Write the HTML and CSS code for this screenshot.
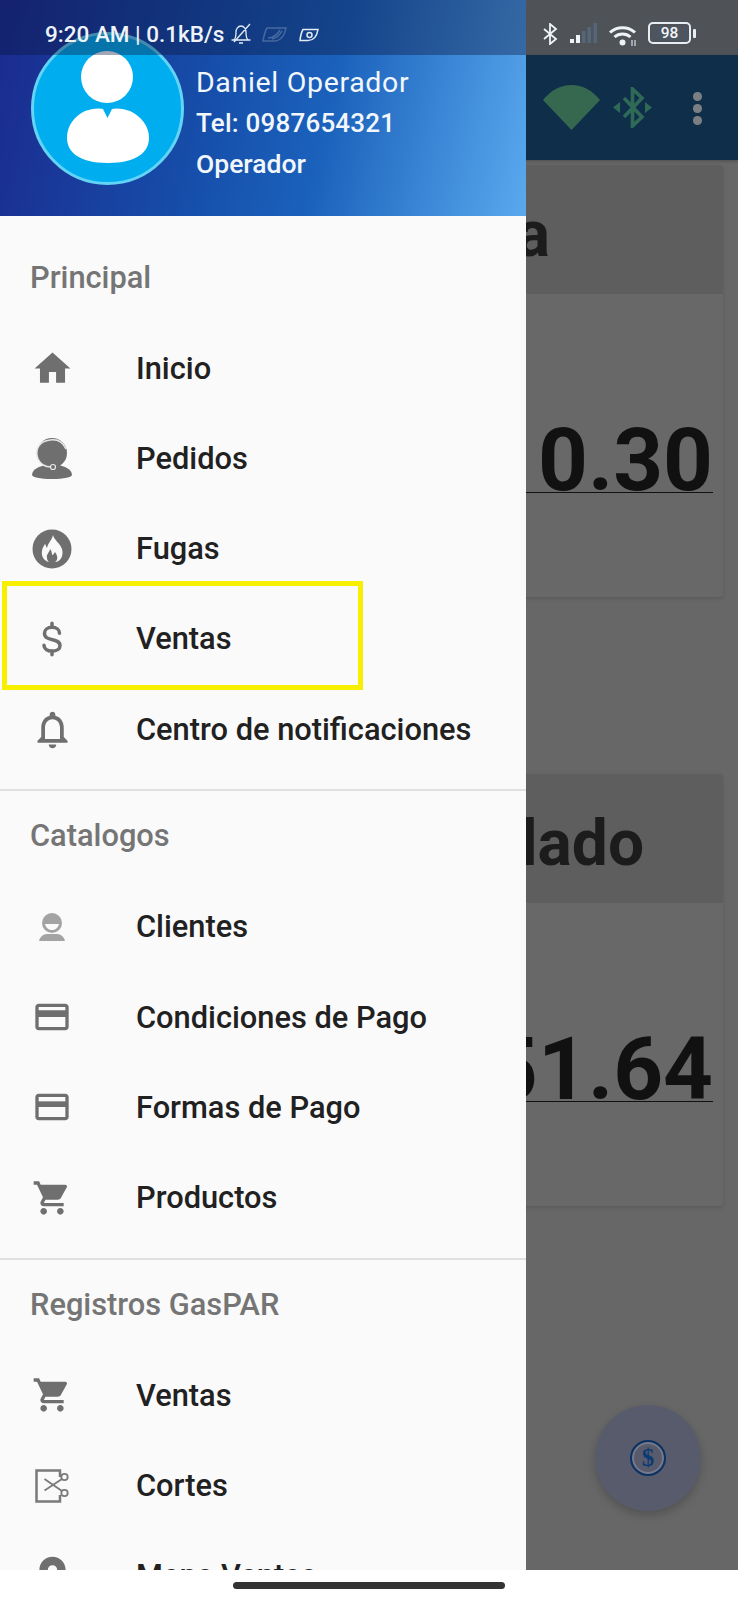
FILE: index.html
```html
<!DOCTYPE html>
<html lang="es">
<head>
<meta charset="utf-8">
<title>GasPAR</title>
<link rel="stylesheet" href="styles.css">
</head>
<body>
<div class="phone">
  <div class="stage">
    <main class="app">
      <div class="appbar">
        <svg class="ab-wifi" viewBox="0 0 57 45"><path d="M0 15C8 5 18 0 28.500 0S49 5 57 15L28.500 45z"/></svg>
        <svg class="ab-bt" viewBox="0 0 39 41"><path class="bt-line" d="M11 11l18 19-9.500 9V2l9.500 9-18 19"/><path class="bt-tri" d="M0 20.500l7-5.500v11zM39 20.500l-7-5.500v11z"/></svg>
        <span class="ab-dots"><i></i><i></i><i></i></span>
      </div>
      <div class="cards">
        <section class="card">
          <h2 class="card-title card-title-one">Venta</h2>
          <div class="card-body"><div class="amount">$ 0.30</div></div>
        </section>
        <section class="card">
          <h2 class="card-title card-title-two">Acumulado</h2>
          <div class="card-body"><div class="amount">$51.64</div></div>
        </section>
      </div>
      <button class="fab"><span class="fab-ring">$</span></button>
    </main>

    <aside class="drawer">
      <header class="drawer-head">
        <svg class="avatar" viewBox="0 0 153 153">
          <circle cx="76.500" cy="76.500" r="75" fill="#00aeef" stroke="#63d3f6" stroke-width="3"/>
          <ellipse cx="76" cy="45" rx="26" ry="26" fill="#fff"/>
          <path d="M54 79c8-3 15-3 18-2l4.500 9 4.500-9c4-1 10-1 18 2 10 5 19 14 19 27 0 14-12 25-41 25s-41-11-41-25c0-13 8-22 18-27z" fill="#fff"/>
        </svg>
        <div class="who">
          <div class="who-name">Daniel Operador</div>
          <div class="who-tel">Tel: 0987654321</div>
          <div class="who-role">Operador</div>
        </div>
      </header>

      <section class="group group-first">
        <h3 class="group-title">Principal</h3>
        <a class="row"><span class="ico"><svg class="s43" viewBox="0 0 24 24"><path d="M10 20v-6h4v6h5v-8h3L12 3 2 12h3v8z"/></svg></span><span class="label">Inicio</span></a>
        <a class="row"><span class="ico"><svg class="s42" viewBox="0 0 42 42"><circle cx="21" cy="16" r="15"/><path d="M1 38c0-6 8-9 14-10h12c6 1 14 4 14 10 0 2-8 4-20 4S1 40 1 38z"/><path class="cut" d="M7 22C3 12 9 4 19 3c7-1 13 2 16 9M7 22c3 6 8 8 13 8"/><circle class="cut-dot" cx="22" cy="30" r="2.500"/></svg></span><span class="label">Pedidos</span></a>
        <a class="row"><span class="ico"><svg class="s40" viewBox="0 0 40 40"><circle cx="20" cy="20" r="19.500"/><path class="flame" d="M21 6c1 5 7 8 9 14 2 7-2 13-7 13 3-2 3-6 0-10-1 2-2 3-3 3 0-3-1-5-2-6 0 3-4 5-3 9 0 2 1 3 2 4-5-1-8-6-7-11 0-3 2-5 3-7 1 1 1 3 2 4 1-5 5-8 6-13z"/></svg></span><span class="label">Fugas</span></a>
        <a class="row row-mark"><span class="ico"><svg class="s40" viewBox="0 0 24 24"><path class="thin" d="M16.500 8.500c0-2-1.800-3.500-4.500-3.500S7.500 6.500 7.500 8.500c0 5.500 9.300 2.500 9.300 7.500 0 2-2 3.300-4.800 3.300s-4.800-1.300-4.800-3.500M12 2.500V5M12 19v2.500"/></svg></span><span class="label">Ventas</span></a>
        <a class="row"><span class="ico"><svg class="s45" viewBox="0 0 24 24"><path d="M12 22c1.100 0 2-.9 2-2h-4c0 1.100.9 2 2 2zm6-6v-5c0-3.070-1.630-5.640-4.500-6.320V4c0-.83-.67-1.500-1.500-1.500s-1.500.67-1.500 1.500v.68C7.640 5.360 6 7.920 6 11v5l-2 2v1h16v-1l-2-2zm-2 1H8v-6c0-2.480 1.510-4.500 4-4.500s4 2.020 4 4.500v6z"/></svg></span><span class="label">Centro de notificaciones</span></a>
      </section>

      <section class="group">
        <h3 class="group-title">Catalogos</h3>
        <a class="row"><span class="ico"><svg class="s28 soft" viewBox="0 0 28 28"><circle cx="14" cy="10" r="10"/><path class="cut-fill" d="M7 11h14c-1 4-4 6-7 6s-6-2-7-6z"/><path d="M1 28c1-4 4-7 8-7h10c4 0 7 3 8 7z"/></svg></span><span class="label">Clientes</span></a>
        <a class="row"><span class="ico"><svg class="s40" viewBox="0 0 24 24"><path d="M20 4H4c-1.110 0-1.990.89-1.990 2L2 18c0 1.110.89 2 2 2h16c1.110 0 2-.89 2-2V6c0-1.110-.89-2-2-2zm0 14H4v-6h16v6zm0-10H4V6h16v2z"/></svg></span><span class="label">Condiciones de Pago</span></a>
        <a class="row"><span class="ico"><svg class="s40" viewBox="0 0 24 24"><path d="M20 4H4c-1.110 0-1.990.89-1.990 2L2 18c0 1.110.89 2 2 2h16c1.110 0 2-.89 2-2V6c0-1.110-.89-2-2-2zm0 14H4v-6h16v6zm0-10H4V6h16v2z"/><path class="band" d="M4 7.600h16v1H4z"/></svg></span><span class="label">Formas de Pago</span></a>
        <a class="row"><span class="ico"><svg class="s40" viewBox="0 0 24 24"><path d="M7 18c-1.100 0-1.990.9-1.990 2S5.900 22 7 22s2-.9 2-2-.9-2-2-2zM1 2v2h2l3.600 7.590-1.350 2.450c-.16.28-.25.61-.25.96 0 1.100.9 2 2 2h12v-2H7.420c-.14 0-.25-.11-.25-.25l.03-.12.9-1.630h7.450c.75 0 1.410-.41 1.750-1.030l3.580-6.490c.08-.14.12-.31.12-.48 0-.55-.45-1-1-1H5.210l-.94-2H1zm16 16c-1.100 0-1.990.9-1.990 2s.89 2 1.990 2 2-.9 2-2-.9-2-2-2z"/></svg></span><span class="label">Productos</span></a>
      </section>

      <section class="group">
        <h3 class="group-title">Registros GasPAR</h3>
        <a class="row"><span class="ico"><svg class="s40" viewBox="0 0 24 24"><path d="M7 18c-1.100 0-1.990.9-1.990 2S5.900 22 7 22s2-.9 2-2-.9-2-2-2zM1 2v2h2l3.600 7.590-1.350 2.450c-.16.28-.25.61-.25.96 0 1.100.9 2 2 2h12v-2H7.420c-.14 0-.25-.11-.25-.25l.03-.12.9-1.630h7.450c.75 0 1.410-.41 1.750-1.030l3.580-6.490c.08-.14.12-.31.12-.48 0-.55-.45-1-1-1H5.210l-.94-2H1zm16 16c-1.100 0-1.990.9-1.990 2s.89 2 1.990 2 2-.9 2-2-.9-2-2-2z"/></svg></span><span class="label">Ventas</span></a>
        <a class="row"><span class="ico"><svg class="s34" viewBox="0 0 34 34"><path class="box" d="M25 8V1.500H1.500v31H25V26"/><circle class="sc" cx="29.500" cy="8" r="3.200"/><circle class="sc" cx="29.500" cy="24" r="3.200"/><path class="sc" d="M27 10L9.500 21.500M27 22L9.500 10"/></svg></span><span class="label">Cortes</span></a>
        <a class="row"><span class="ico"><svg class="s45" viewBox="0 0 24 24"><path fill-rule="evenodd" d="M12 2C8.130 2 5 5.130 5 9c0 5.250 7 13 7 13s7-7.750 7-13c0-3.870-3.130-7-7-7zm0 9.500a2.500 2.500 0 1 1 0-5 2.500 2.500 0 0 1 0 5z"/></svg></span><span class="label">Mapa Ventas</span></a>
      </section>
    </aside>

    <div class="statusbar">
      <div class="st-left">
        <span class="st-text">9:20 AM | 0.1kB/s</span>
        <svg class="st-bell" viewBox="0 0 22 22"><path d="M4 17c2-2 2-4 2-8 0-3 2-6 5-6s5 3 5 6c0 4 0 6 2 8zM1.500 17h19M9 20h4M20 1L4 19"/></svg>
        <svg class="st-leaf st-faint" viewBox="0 0 25 17"><path d="M5 2h19c-1 7-5 13-12 13H1C2 9 3 5 5 2z"/><path d="M6 12c4 0 9-3 12-8M10 13c4-1 8-4 10-8"/></svg>
        <svg class="st-leaf" viewBox="0 0 20 14"><path d="M4 1.500h15c-1 6-4 11-10 11H1C1.500 8 2.500 4 4 1.500z"/><circle cx="10.500" cy="7" r="2.500"/></svg>
      </div>
      <div class="st-right">
        <svg class="st-bt" viewBox="0 0 15 22"><path d="M1 6l12 10-6 5V1l6 5L1 16"/></svg>
        <svg class="st-sig" viewBox="0 0 27 20"><path class="on" d="M0 16h4v4H0zM6 12h4v8H6z"/><path class="off" d="M12 8h3.500v12H12zM17.500 4H21v16h-3.500zM23.500 0H27v20h-3.500z"/></svg>
        <svg class="st-wifi" viewBox="0 0 29 23"><path class="arc" d="M2 8.500c7-6.500 18-6.500 25 0M6.500 13c4.500-4 11.500-4 16 0"/><circle cx="14.500" cy="18.500" r="3" fill="#eef3f7"/><path class="tiny" d="M24 16v6M27 16v6"/></svg>
        <span class="st-batt"><span class="batt-in">98</span></span><span class="batt-tip"></span>
      </div>
    </div>
  </div>
  <nav class="navbar"><span class="homebar"></span></nav>
</div>
</body>
</html>
```

FILE: styles.css
```css
*, *::before, *::after { box-sizing: border-box; }
html, body { margin: 0; padding: 0; background: #fff; }
body { font-family: Roboto, "Liberation Sans", sans-serif; width: 738px; height: 1600px; overflow: hidden; }
h2, h3 { margin: 0; }

.phone { display: flex; flex-direction: column; height: 1600px; }
.stage { position: relative; height: 1570px; overflow: hidden; flex: none; }
.navbar { flex: 1; background: #fff; display: flex; justify-content: center; padding: 12px 0 0 0; }
.homebar { width: 272px; height: 7px; border-radius: 4px; background: #333; }

/* app behind the drawer, dimmed */
.app { height: 100%; background: #676767; padding-top: 55px; position: relative; }
.appbar { height: 105px; background: #0f2e4a; display: flex; align-items: flex-start; padding: 30px 0 0 543px; box-shadow: 0 1px 3px rgba(0,0,0,.25); }
.ab-wifi { width: 57px; height: 45px; fill: #35684f; flex: none; }
.ab-bt { width: 39px; height: 41px; margin: 2px 0 0 13px; flex: none; }
.bt-line { fill: none; stroke: #2f6a56; stroke-width: 3.600; }
.bt-tri { fill: #2f6a56; }
.ab-dots { display: flex; flex-direction: column; gap: 3.500px; margin: 7px 0 0 41px; }
.ab-dots i { width: 8.500px; height: 8.500px; border-radius: 50%; background: #7b7f84; }

.cards { padding: 5px 15px 0; display: flex; flex-direction: column; gap: 177px; }
.card { border-radius: 4px; overflow: hidden; box-shadow: 0 2px 4px rgba(0,0,0,.12); background: #686868; }
.card-title { height: 129px; background: #5e5e5e; font-size: 64px; font-weight: 700; line-height: 115px; padding-top: 12px; color: #1c1c1c; text-align: right; white-space: nowrap; }
.card-title-one { padding-right: 173px; }
.card-title-two { padding-right: 79px; }
.card-body { height: 303px; padding: 134px 10px 0 0; }
.amount { font-size: 87px; font-weight: 700; line-height: 64px; height: 65px; color: #111; border-bottom: 1px solid #111; text-align: right; white-space: pre; }

.fab { position: absolute; left: 595px; top: 1405px; width: 106px; height: 106px; border: 0; border-radius: 50%; background: #585b6b; box-shadow: 0 4px 10px rgba(0,0,0,.2); display: flex; align-items: center; justify-content: center; padding: 0; }
.fab-ring { width: 36px; height: 36px; border-radius: 50%; border: 2.500px solid #0c3263; box-shadow: inset 0 0 0 2px #767a8c; color: #0c3a75; font: 700 25px/31px "Liberation Serif", serif; text-align: center; }

/* drawer */
.drawer { position: absolute; left: 0; top: 0; bottom: 0; width: 526px; background: #fafafa; overflow: hidden; }
.drawer-head { height: 216px; background: linear-gradient(102deg, #1b2a8e 0%, #1650ac 42%, #1b62bc 62%, #5aa9ee 100%); display: flex; align-items: flex-start; padding: 32px 0 0 31px; color: #f2f7fc; }
.avatar { width: 153px; height: 153px; flex: none; }
.who { margin-left: 12px; padding-top: 31px; }
.who-name { font-size: 28.500px; line-height: 40px; letter-spacing: .67px; }
.who-tel { font-size: 26px; font-weight: 500; line-height: 40px; letter-spacing: .2px; }
.who-role { font-size: 26.500px; font-weight: 500; line-height: 42px; }

.group { padding-bottom: 15px; border-bottom: 2px solid #e0e0e0; }
.group-first { padding-top: 16.600px; }
.group:last-child { border-bottom: 0; }
.group-title { font-size: 30.800px; font-weight: 500; line-height: 90.300px; color: #757575; padding-left: 30px; }
.row { display: flex; align-items: center; height: 90.300px; }
.ico { width: 104px; flex: none; display: flex; justify-content: center; align-items: center; margin-right: 32px; }
.ico svg { fill: #6f6f6f; display: block; }
.label { font-size: 30.800px; font-weight: 500; color: #212121; white-space: nowrap; }
.row-mark { position: relative; }
.row-mark::after { content: ""; position: absolute; left: 2px; top: -12.500px; width: 361px; height: 109px; border: 5px solid #f7ee00; }
.s43 { width: 43px; height: 43px; }
.s42 { width: 42px; height: 42px; }
.s40 { width: 40px; height: 40px; }
.s45 { width: 45px; height: 45px; }
.s34 { width: 34px; height: 34px; }
.s28 { width: 28px; height: 28px; }
.ico .soft { fill: #a3a3a3; }
.cut { fill: none; stroke: #e8e8e8; stroke-width: 1.500; }
.ico .cut-dot { fill: #6f6f6f; stroke: #e8e8e8; stroke-width: 1.200; }
.ico .flame, .ico .cut-fill { fill: #fafafa; }
.ico .thin { fill: none; stroke: #6f6f6f; stroke-width: 2.100; stroke-linecap: round; }
.ico .band { fill: #fafafa; }
.ico .box { fill: none; stroke: #7a7a7a; stroke-width: 2.500; }
.ico .sc { fill: none; stroke: #7a7a7a; stroke-width: 1.800; }

/* status bar */
.statusbar { position: absolute; left: 0; right: 0; top: 0; height: 55px; display: flex; color: #eef3f7; }
.st-left { width: 526px; background: rgba(10,20,60,.38); display: flex; align-items: center; padding-left: 45px; }
.st-right { flex: 1; background: rgba(8,25,40,.25); display: flex; align-items: center; padding-left: 17px; }
.st-text { font-size: 22.500px; font-weight: 500; white-space: nowrap; line-height: 1; margin-top: 14px; }
.st-bell { width: 22px; height: 22px; margin: 13px 0 0 6px; fill: none; stroke: #e4ebf3; stroke-width: 1.300; }
.st-leaf { width: 20px; height: 14px; margin: 14px 0 0 12px; fill: none; stroke: #e4ebf3; stroke-width: 1.500; }
.st-faint { width: 25px; height: 17px; opacity: .25; margin-left: 10px; }
.st-bt { width: 15px; height: 22px; margin-top: 13px; fill: none; stroke: #eef3f7; stroke-width: 1.800; }
.st-sig { width: 27px; height: 20px; margin: 11px 0 0 12px; }
.on { fill: #eef3f7; }
.off { fill: #54677a; }
.st-wifi { width: 29px; height: 23px; margin: 16px 0 0 11px; }
.arc { fill: none; stroke: #eef3f7; stroke-width: 3; }
.tiny { fill: none; stroke: #b8c4cf; stroke-width: 1.500; }
.st-batt { width: 43px; height: 22px; margin: 11px 0 0 11px; border: 2.500px solid #e6edf3; border-radius: 5px; display: flex; padding: 1.500px; }
.batt-in { flex: 1; background: #4d5660; border-radius: 2px; font-size: 15.500px; font-weight: 500; line-height: 14px; text-align: center; color: #f2f5f8; }
.batt-tip { width: 2.500px; height: 9px; margin: 11px 0 0 2px; background: #e6edf3; border-radius: 1px; }
```
